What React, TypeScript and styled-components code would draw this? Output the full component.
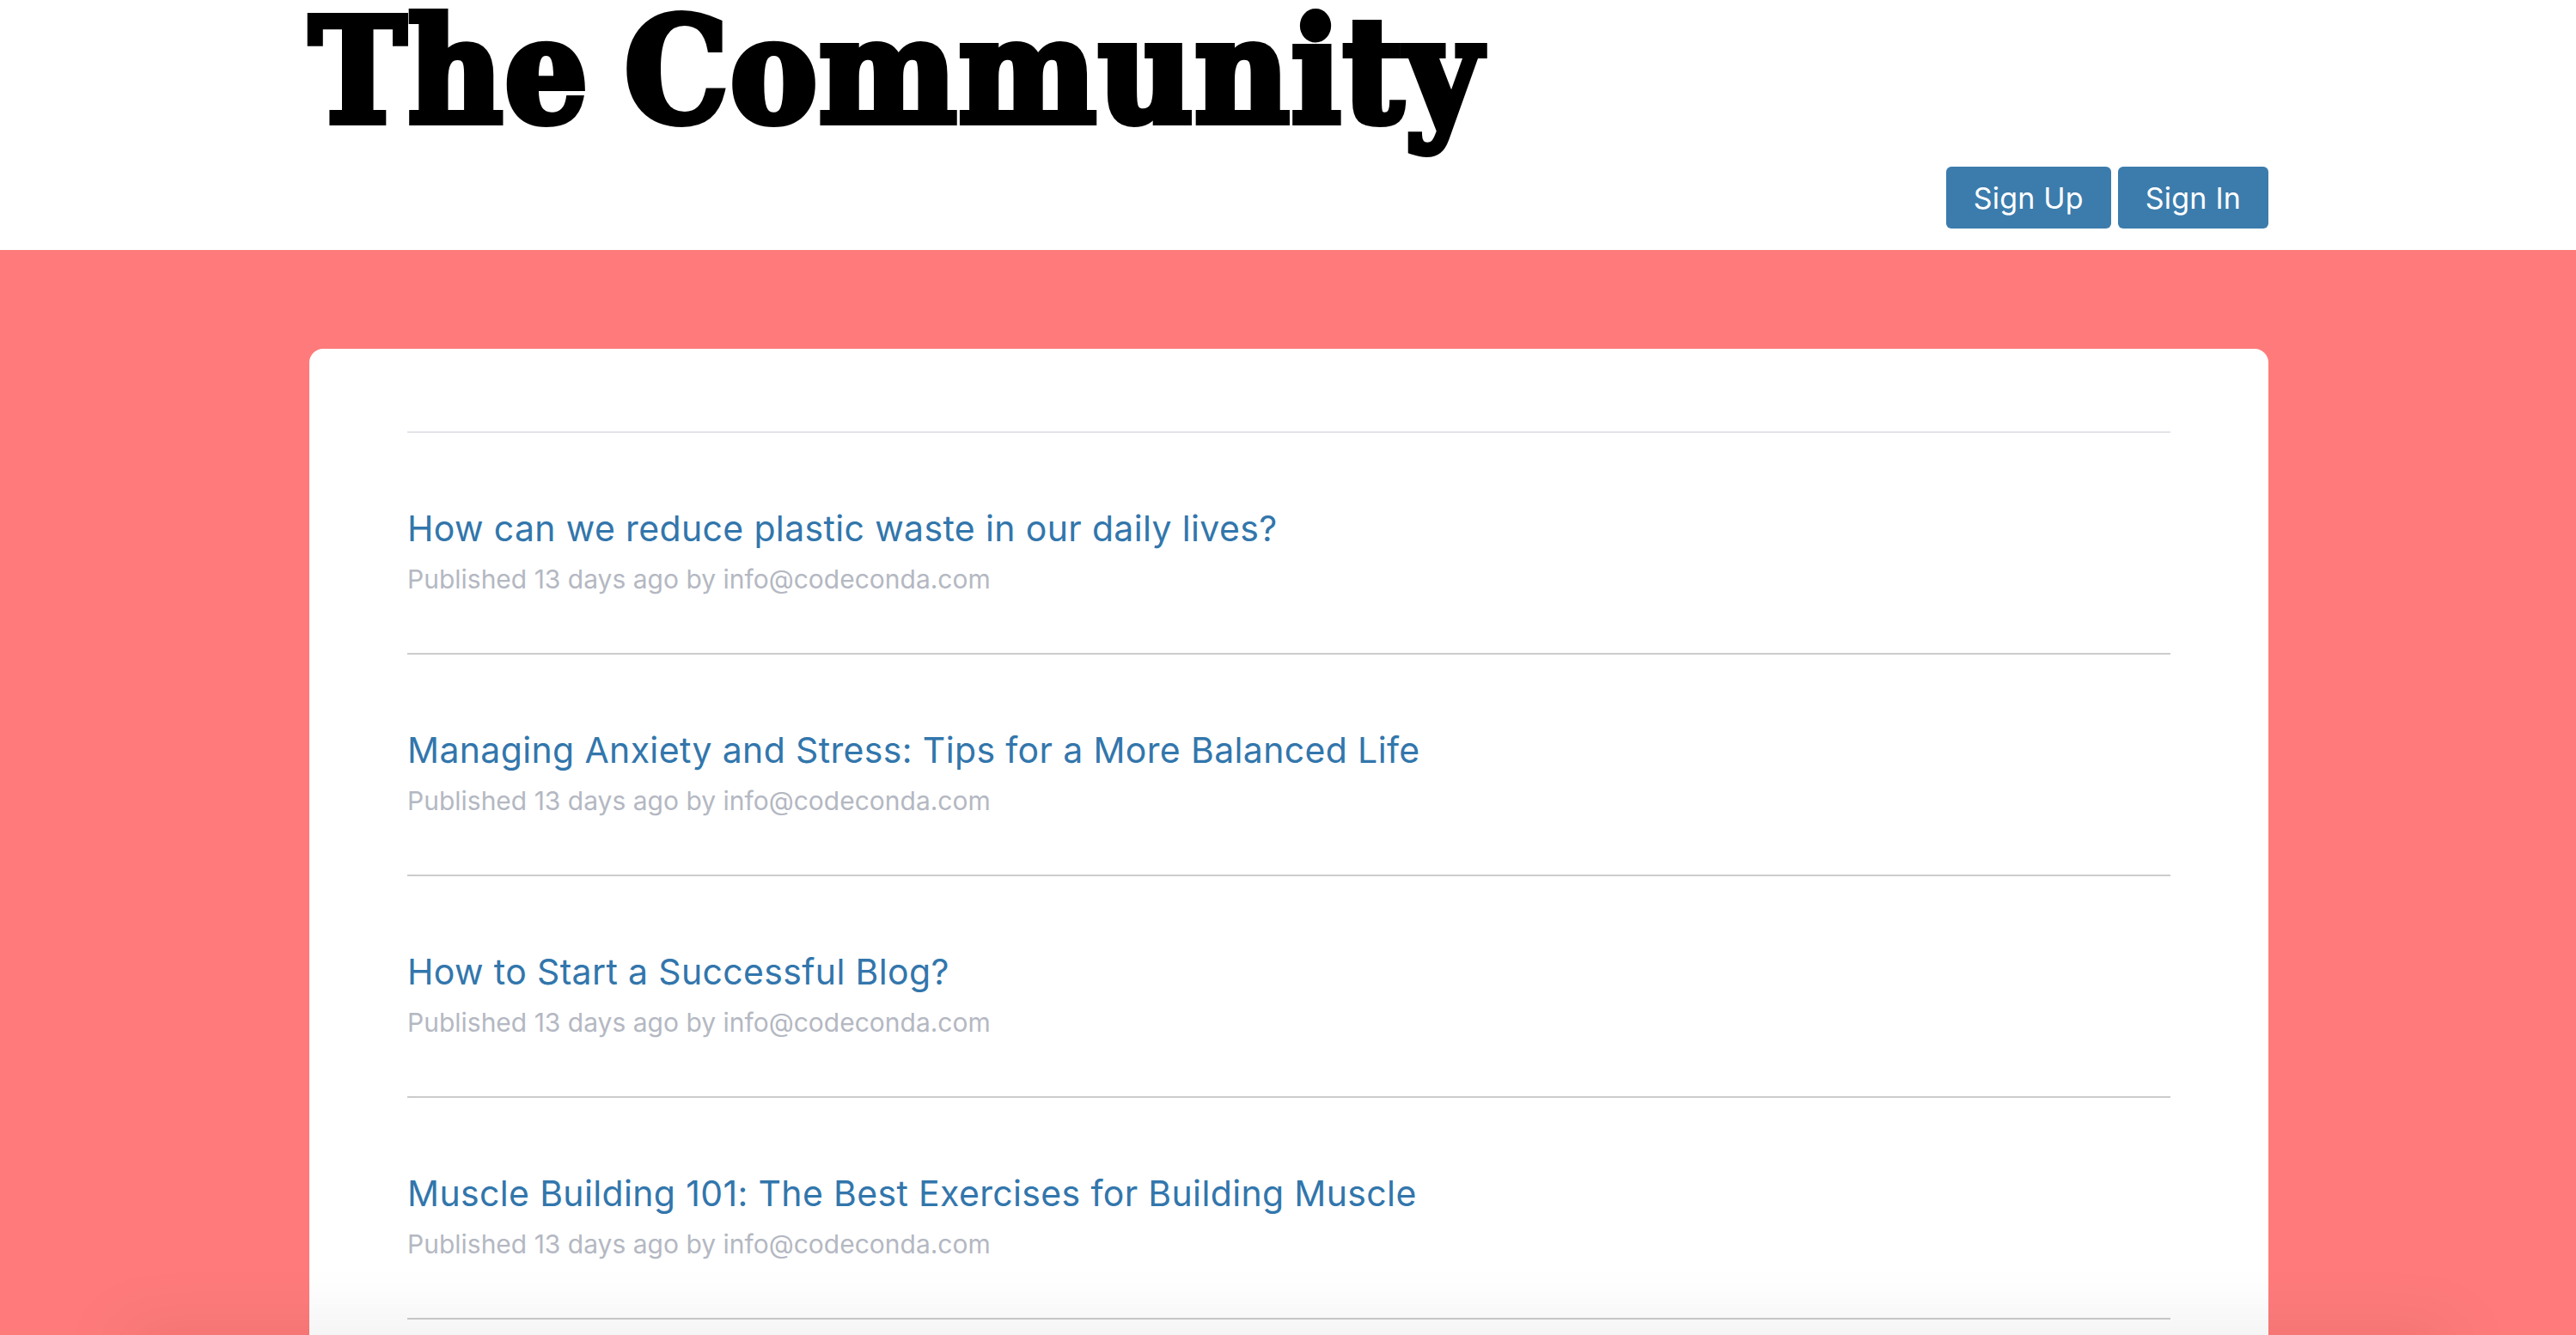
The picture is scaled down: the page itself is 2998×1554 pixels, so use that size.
import styled, { createGlobalStyle } from "styled-components";

const posts = [
  "How can we reduce plastic waste in our daily lives?",
  "Managing Anxiety and Stress: Tips for a More Balanced Life",
  "How to Start a Successful Blog?",
  "Muscle Building 101: The Best Exercises for Building Muscle",
];

const App = () => {
  return (
    <Page>
      <GlobalStyle />
      <Header>
        <Title>The Community</Title>
        <Actions>
          <Button href="#">Sign Up</Button>
          <Button href="#">Sign In</Button>
        </Actions>
      </Header>
      <Main>
        <Card>
          {posts.map((post) => (
            <Post key={post}>
              <PostLink href="#">{post}</PostLink>
              <Meta>Published 13 days ago by info@codeconda.com</Meta>
            </Post>
          ))}
        </Card>
      </Main>
      <FooterShadow />
    </Page>
  );
};

export default App;

const GlobalStyle = createGlobalStyle`
html, body {
  margin: 0;
  padding: 0;
  height: 100%;
  overflow: hidden;
  background-color: #ff7b7b;
}
* {
  box-sizing: border-box;
}
`;

const Page = styled.div`
width: 100%;
height: 1554px;
overflow: hidden;
font-family: "Inter", "Liberation Sans", sans-serif;
`;

const Header = styled.header`
height: 291px;
padding: 0 358px 25px 360px;
background-color: white;
display: flex;
flex-direction: column;
justify-content: space-between;
`;

const Title = styled.h1`
margin: 0;
height: 170px;
font-family: "DejaVu Serif Condensed", "DejaVu Serif", serif;
font-size: 168px;
line-height: 166px;
font-weight: 700;
letter-spacing: 2.5px;
word-spacing: -14px;
color: black;
-webkit-text-stroke: 8px black;
white-space: nowrap;
`;

const Actions = styled.div`
display: flex;
justify-content: flex-end;
gap: 8px;
`;

const Button = styled.a`
height: 72px;
padding: 0 32px;
display: flex;
align-items: center;
border-radius: 6px;
background-color: #3c7cac;
color: white;
font-size: 34px;
letter-spacing: 0.2px;
text-decoration: none;
white-space: nowrap;
`;

const Main = styled.main`
padding: 115px 358px 0 360px;
`;

const Card = styled.div`
background-color: white;
border-radius: 16px;
padding: 96px 114px 60px;
`;

const Post = styled.article`
height: 258px;
padding-top: 84px;
border-top: 2px solid #cccccc;
display: flex;
flex-direction: column;
align-items: flex-start;

&:first-child {
  border-top-color: #e2e4e8;
}

&:last-child {
  height: 260px;
  border-bottom: 2px solid #cccccc;
}
`;

const PostLink = styled.a`
font-size: 41px;
line-height: 54px;
letter-spacing: 0.35px;
color: #3276ac;
text-decoration: none;
white-space: nowrap;
`;

const Meta = styled.div`
margin-top: 12px;
font-size: 30px;
line-height: 40px;
color: #b4b8c2;
white-space: nowrap;
`;

const FooterShadow = styled.div`
position: fixed;
left: 140px;
right: 140px;
bottom: -30px;
height: 30px;
background-color: white;
box-shadow: 0 0 80px rgba(0, 0, 0, 0.14);
`;
